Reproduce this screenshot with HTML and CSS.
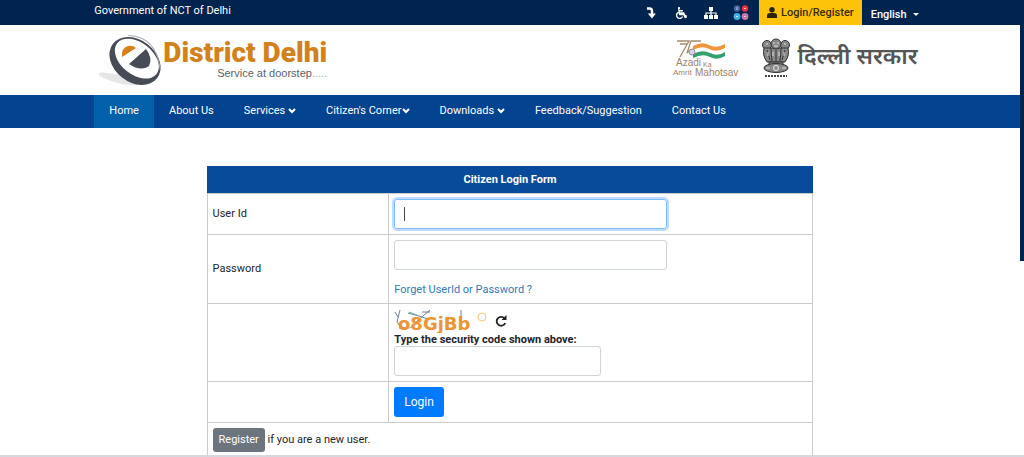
FILE: index.html
```html
<!DOCTYPE html>
<html lang="en">
<head>
  <meta charset="UTF-8">
  <meta name="viewport" content="width=device-width, initial-scale=1.0">
  <title>e-District Delhi - Citizen Login</title>
  <link rel="stylesheet" href="styles.css">
</head>
<body>
  <div class="topbar">
    <div class="container">
      <span class="gov">Government of NCT of Delhi</span>
      <div class="tools">
        <a href="#main" class="tool" aria-label="Skip to main content">
          <svg width="10" height="12" viewBox="0 0 10 12"><path d="M1 1.500h2.500q2.500 0 2.500 2.500v3" fill="none" stroke="#fff" stroke-width="2.400"/><path d="M1.800 6.500h8L6 11.500z" fill="#fff"/></svg>
        </a>
        <a href="#" class="tool" aria-label="Accessibility">
          <svg width="12" height="12" viewBox="0 0 512 512"><path fill="#fff" d="M496 398l14 28c4 8 1 18-7 22l-64 33c-10 5-22 1-27-9l-54-120H192c-12 0-22-9-24-21-45-308-40-273-40-283-1-28 23-51 52-48 23 3 41 22 43 45 1 26-16 47-39 52l4 31h132c9 0 16 7 16 16v32c0 9-7 16-16 16H197l5 32h170c12 0 23 7 28 18l52 109 22-11c8-4 18-1 22 8zM312 380l24 53c-28 47-79 79-138 79C110 512 38 440 38 352c0-69 43-127 104-150l9 60c-33 17-55 51-55 90 0 56 46 102 102 102 52 0 96-28 102-74z"/></svg>
        </a>
        <a href="#" class="tool" aria-label="Sitemap">
          <svg width="14" height="12" viewBox="0 0 14 12"><path fill="#fff" d="M5 0h4v4H5zM0 8h4v4H0zM5 8h4v4H5zM10 8h4v4h-4z"/><path d="M7 4v4M2 8V6h10v2" fill="none" stroke="#fff" stroke-width="1.200"/></svg>
        </a>
        <a href="#" class="tool" aria-label="Social media">
          <svg width="16" height="15" viewBox="0 0 16 15"><circle cx="4" cy="3.500" r="3.200" fill="#48629c"/><circle cx="12" cy="3.500" r="3.200" fill="#e5343f"/><circle cx="4" cy="11.500" r="3.400" fill="#3fb5e5"/><circle cx="12" cy="11.500" r="3.400" fill="#c679a5"/><path d="M4 2v3M11 3.500h2M3 11.500h2M11 11.500h2" stroke="#fff" opacity=".7"/></svg>
        </a>
        <a href="#" class="login-link">
          <svg width="10" height="11" viewBox="0 0 10 11"><circle cx="5" cy="2.800" r="2.700" fill="#2b2412"/><path d="M0 11V8.500Q0 6 3 6h4q3 0 3 2.500V11z" fill="#2b2412"/></svg>
          Login/Register
        </a>
        <button type="button" class="lang">English <i class="caret"></i></button>
      </div>
    </div>
  </div>

  <header class="header">
    <div class="container">
      <a href="#" class="logo" aria-label="e-District Delhi">
        <svg width="66" height="54" viewBox="0 0 66 54">
          <ellipse cx="22" cy="46" rx="21" ry="4" fill="#e6e6e8" transform="rotate(14 22 46)"/>
          <g transform="rotate(38 38 28)">
            <ellipse cx="38" cy="28" rx="28" ry="21" fill="#474b55"/>
            <ellipse cx="38" cy="25" rx="25" ry="16" fill="#fff"/>
            <path d="M17 12Q40 -5 64 20" fill="none" stroke="#a9abb0"/>
          </g>
          <path d="M25 24Q24 15 31 13Q36 12 39 15z" fill="#d2811b"/>
          <path d="M32 31L49 16Q56 25 52 33Q44 39 32 31z" fill="#474b55"/>
        </svg>
        <span class="logo-text">
          <span class="logo-name">District Delhi</span>
          <span class="logo-tag">Service at doorstep<span class="dots">.....</span></span>
        </span>
      </a>
      <div class="partners">
        <svg class="azadi" width="68" height="40" viewBox="0 0 68 40" role="img" aria-label="Azadi Ka Amrit Mahotsav">
          <path d="M4 3h12L7 19M7 6h7M28 3H18l-4 12q3-4 7-1" fill="none" stroke="#a48c6e" stroke-width="1.300"/>
          <path d="M20 8q9-5 16-1t16-1v4q-9 5-16 1t-16 1z" fill="#ee973b"/>
          <path d="M20 16q9-5 17-1t15-1v4q-8 5-15 1t-17 1z" fill="#34a06d"/>
          <circle cx="19" cy="14" r="3" fill="#d7d4e0" stroke="#8b8aa8"/>
          <text x="3" y="28" font-size="10">Azadi</text>
          <text x="30" y="29" font-size="7">Ka</text>
          <text x="0" y="37" font-size="8">Amrit</text>
          <text x="22" y="38" font-size="10">Mahotsav</text>
        </svg>
        <svg width="30" height="40" viewBox="0 0 30 40" role="img" aria-label="State emblem">
          <g fill="#888" stroke="#333" stroke-width="1">
            <circle cx="6" cy="7" r="4.500"/><circle cx="24" cy="7" r="4.500"/>
            <path d="M3 10q-2 7 3 14h18q5-7 3-14z"/>
            <circle cx="15" cy="6" r="5"/>
            <path d="M10 10q0 6 1 13M20 10q0 6-1 13M15 12v11M6 12l3 10M24 12l-3 10" fill="none"/>
            <path d="M8 24h14v3H8z"/>
            <ellipse cx="15" cy="30" rx="12" ry="4.500"/>
          </g>
          <path d="M12 5h2M16 5h2M13 8h4M5 6h2M23 6h2M7 14v4M12 14v4M18 14v4M23 14v4M5 30h4M21 30h4" stroke="#ddd"/>
          <circle cx="15" cy="30" r="2.500" fill="none" stroke="#eee"/>
          <path d="M4 38h22" stroke="#444" stroke-width="2" stroke-dasharray="2 1"/>
        </svg>
        <span class="hindi" lang="hi">दिल्ली सरकार</span>
      </div>
    </div>
  </header>

  <nav class="nav">
    <div class="container">
      <a href="#" class="active">Home</a>
      <a href="#">About Us</a>
      <a href="#">Services <svg class="chev" width="8" height="6" viewBox="0 0 8 6"><path d="M1 1l3 3 3-3"/></svg></a>
      <a href="#">Citizen's Corner<svg class="chev" width="8" height="6" viewBox="0 0 8 6"><path d="M1 1l3 3 3-3"/></svg></a>
      <a href="#">Downloads <svg class="chev" width="8" height="6" viewBox="0 0 8 6"><path d="M1 1l3 3 3-3"/></svg></a>
      <a href="#">Feedback/Suggestion</a>
      <a href="#">Contact Us</a>
    </div>
  </nav>

  <main id="main">
    <form action="#" method="post">
      <table class="login-table">
        <thead>
          <tr><th colspan="2">Citizen Login Form</th></tr>
        </thead>
        <tbody>
          <tr>
            <td class="label-cell"><label for="userid">User Id</label></td>
            <td><input type="text" id="userid" class="field current"></td>
          </tr>
          <tr>
            <td><label for="password">Password</label></td>
            <td>
              <input type="password" id="password" class="field">
              <a href="#" class="forgot">Forget UserId or Password ?</a>
            </td>
          </tr>
          <tr>
            <td></td>
            <td>
              <div class="captcha">
                <svg width="94" height="24" viewBox="0 0 94 24">
                  <path d="M1 3l3 5M6 1l-3 12q2 5 8 6M14 4q12 3 20 6M22 13l14-12M28 3h8M67 1v8" fill="none" stroke="#6f7f94"/>
                  <path d="M15 3l8 3M5 19q10 3 20-6" fill="none" stroke="#65bdb5"/>
                  <text x="4" y="21" class="code">o8GjBb</text>
                  <circle cx="88" cy="8" r="4" fill="none" stroke="#edc983"/>
                </svg>
                <button type="button" class="refresh" aria-label="Refresh code">
                  <svg width="12" height="12" viewBox="0 0 12 12"><path d="M9.500 3.500A4.400 4.400 0 1 0 10.200 8" fill="none" stroke="#222" stroke-width="1.800"/><path d="M11.500 0v5h-5z" fill="#222"/></svg>
                </button>
              </div>
              <label for="code" class="code-label">Type the security code shown above:</label>
              <input type="text" id="code" class="field short">
            </td>
          </tr>
          <tr>
            <td></td>
            <td><button type="submit" class="btn btn-login">Login</button></td>
          </tr>
          <tr>
            <td colspan="2"><button type="button" class="btn btn-register">Register</button> if you are a new user.</td>
          </tr>
        </tbody>
      </table>
    </form>
  </main>

  <div class="scroll-thumb"></div>
  <div class="bottom-edge"></div>
</body>
</html>
```
FILE: styles.css
```css
* {
  box-sizing: border-box;
}
body {
  margin: 0;
  padding-right: 4px;
  font-family: Roboto, "Noto Sans", sans-serif;
  font-size: 11px;
  line-height: 16px;
  color: #212529;
  background: #fff;
}
a {
  color: inherit;
  text-decoration: none;
}
button, input {
  font-family: inherit;
}
svg {
  flex: none;
}
.container {
  display: flex;
  justify-content: space-between;
  width: 81.5%;
  max-width: 1140px;
  margin: 0 auto;
}

/* top strip */
.topbar {
  background: #01244f;
  color: #fff;
  font-weight: 500;
}
.gov {
  padding-top: 3px;
  font-weight: 400;
}
.tools {
  display: flex;
  height: 25px;
}
.tool {
  display: flex;
  align-items: center;
  justify-content: center;
  width: 30px;
}
.login-link {
  display: flex;
  align-items: center;
  gap: 4px;
  padding: 0 8px;
  margin-left: 3px;
  background: #fdc30b;
  color: #3a2c08;
}
.lang {
  display: flex;
  align-items: center;
  gap: 6px;
  padding: 3px 7px 0 9px;
  border: 0;
  background: none;
  color: #fff;
  font-size: 11px;
  font-weight: 500;
}
.caret {
  border: 3px solid transparent;
  border-top-color: #fff;
  border-bottom: 0;
}

/* logo row */
.header .container {
  align-items: center;
  height: 70px;
}
.logo {
  display: flex;
  align-items: center;
  padding-left: 3px;
}
.logo-text {
  display: flex;
  flex-direction: column;
}
.logo-name {
  font-weight: 900;
  font-size: 28px;
  line-height: 26px;
  color: #d2811b;
}
.logo-tag {
  align-self: flex-end;
  font-family: "Liberation Sans", sans-serif;
  font-size: 11px;
  line-height: 14px;
  color: #5d5f66;
}
.dots {
  color: #a9a9ad;
}
.partners {
  display: flex;
  align-items: flex-start;
  padding: 0 8px 4px 0;
}
.azadi {
  margin-right: 20px;
  font-family: "Liberation Sans", sans-serif;
  fill: #a08468;
}
.hindi {
  margin-left: 7px;
  font-family: "Noto Sans", "Noto Sans Devanagari", sans-serif;
  font-size: 23px;
  line-height: 34px;
  font-weight: 600;
  color: #555;
}

/* menu */
.nav {
  background: #03438f;
  color: #fff;
}
.nav .container {
  justify-content: flex-start;
}
.nav a {
  padding: 8px 15px 9px;
  white-space: nowrap;
}
.nav a.active {
  background: #0360aa;
}
.chev {
  vertical-align: 0;
}
.chev path {
  fill: none;
  stroke: #fff;
  stroke-width: 2;
}

/* login form */
main {
  width: 59.5%;
  max-width: 900px;
  margin: 0 auto;
  padding-top: 38px;
}
.login-table {
  width: 100%;
  border-collapse: collapse;
}
.login-table th {
  padding: 6px 5px 5px;
  background: #084b9a;
  color: #fff;
  font-weight: 700;
}
.login-table td {
  padding: 5px;
  border: 1px solid #ccc;
}
.label-cell {
  width: 30%;
}
.field {
  display: block;
  width: 66%;
  height: 30px;
  padding: 4px 9px;
  border: 1px solid #ced4da;
  border-radius: 3px;
  font-size: 12px;
}
.field.current {
  border-color: #80bdff;
  box-shadow: 0 0 0 2px #bfdeff;
  outline: none;
  background: linear-gradient(#444, #444) 9px center / 1px 14px no-repeat;
}
.field.short {
  width: 50%;
}
.forgot {
  display: inline-block;
  margin-top: 12px;
  color: #337ab7;
}
.captcha {
  display: flex;
  align-items: center;
  gap: 7px;
}
.code {
  font-family: "DejaVu Sans", sans-serif;
  font-weight: 700;
  font-size: 18px;
  fill: #ee9533;
}
.refresh {
  display: flex;
  padding: 0;
  border: 0;
  background: none;
  cursor: pointer;
}
.code-label {
  display: block;
  line-height: 13px;
  font-weight: 700;
}
.btn {
  border: 0;
  border-radius: 3px;
  color: #fff;
  cursor: pointer;
}
.btn-login {
  display: block;
  padding: 6px 10px;
  background: #007bff;
  font-size: 12px;
  line-height: 18px;
}
.btn-register {
  padding: 4px 6px;
  background: #6c757d;
  font-size: 11px;
  line-height: 16px;
}

.scroll-thumb {
  position: fixed;
  top: 0;
  right: 0;
  width: 4px;
  height: 261px;
  background: #01244f;
}
.bottom-edge {
  position: fixed;
  left: 0;
  right: 0;
  bottom: 0;
  height: 2px;
  background: #d5d8df;
}
```
